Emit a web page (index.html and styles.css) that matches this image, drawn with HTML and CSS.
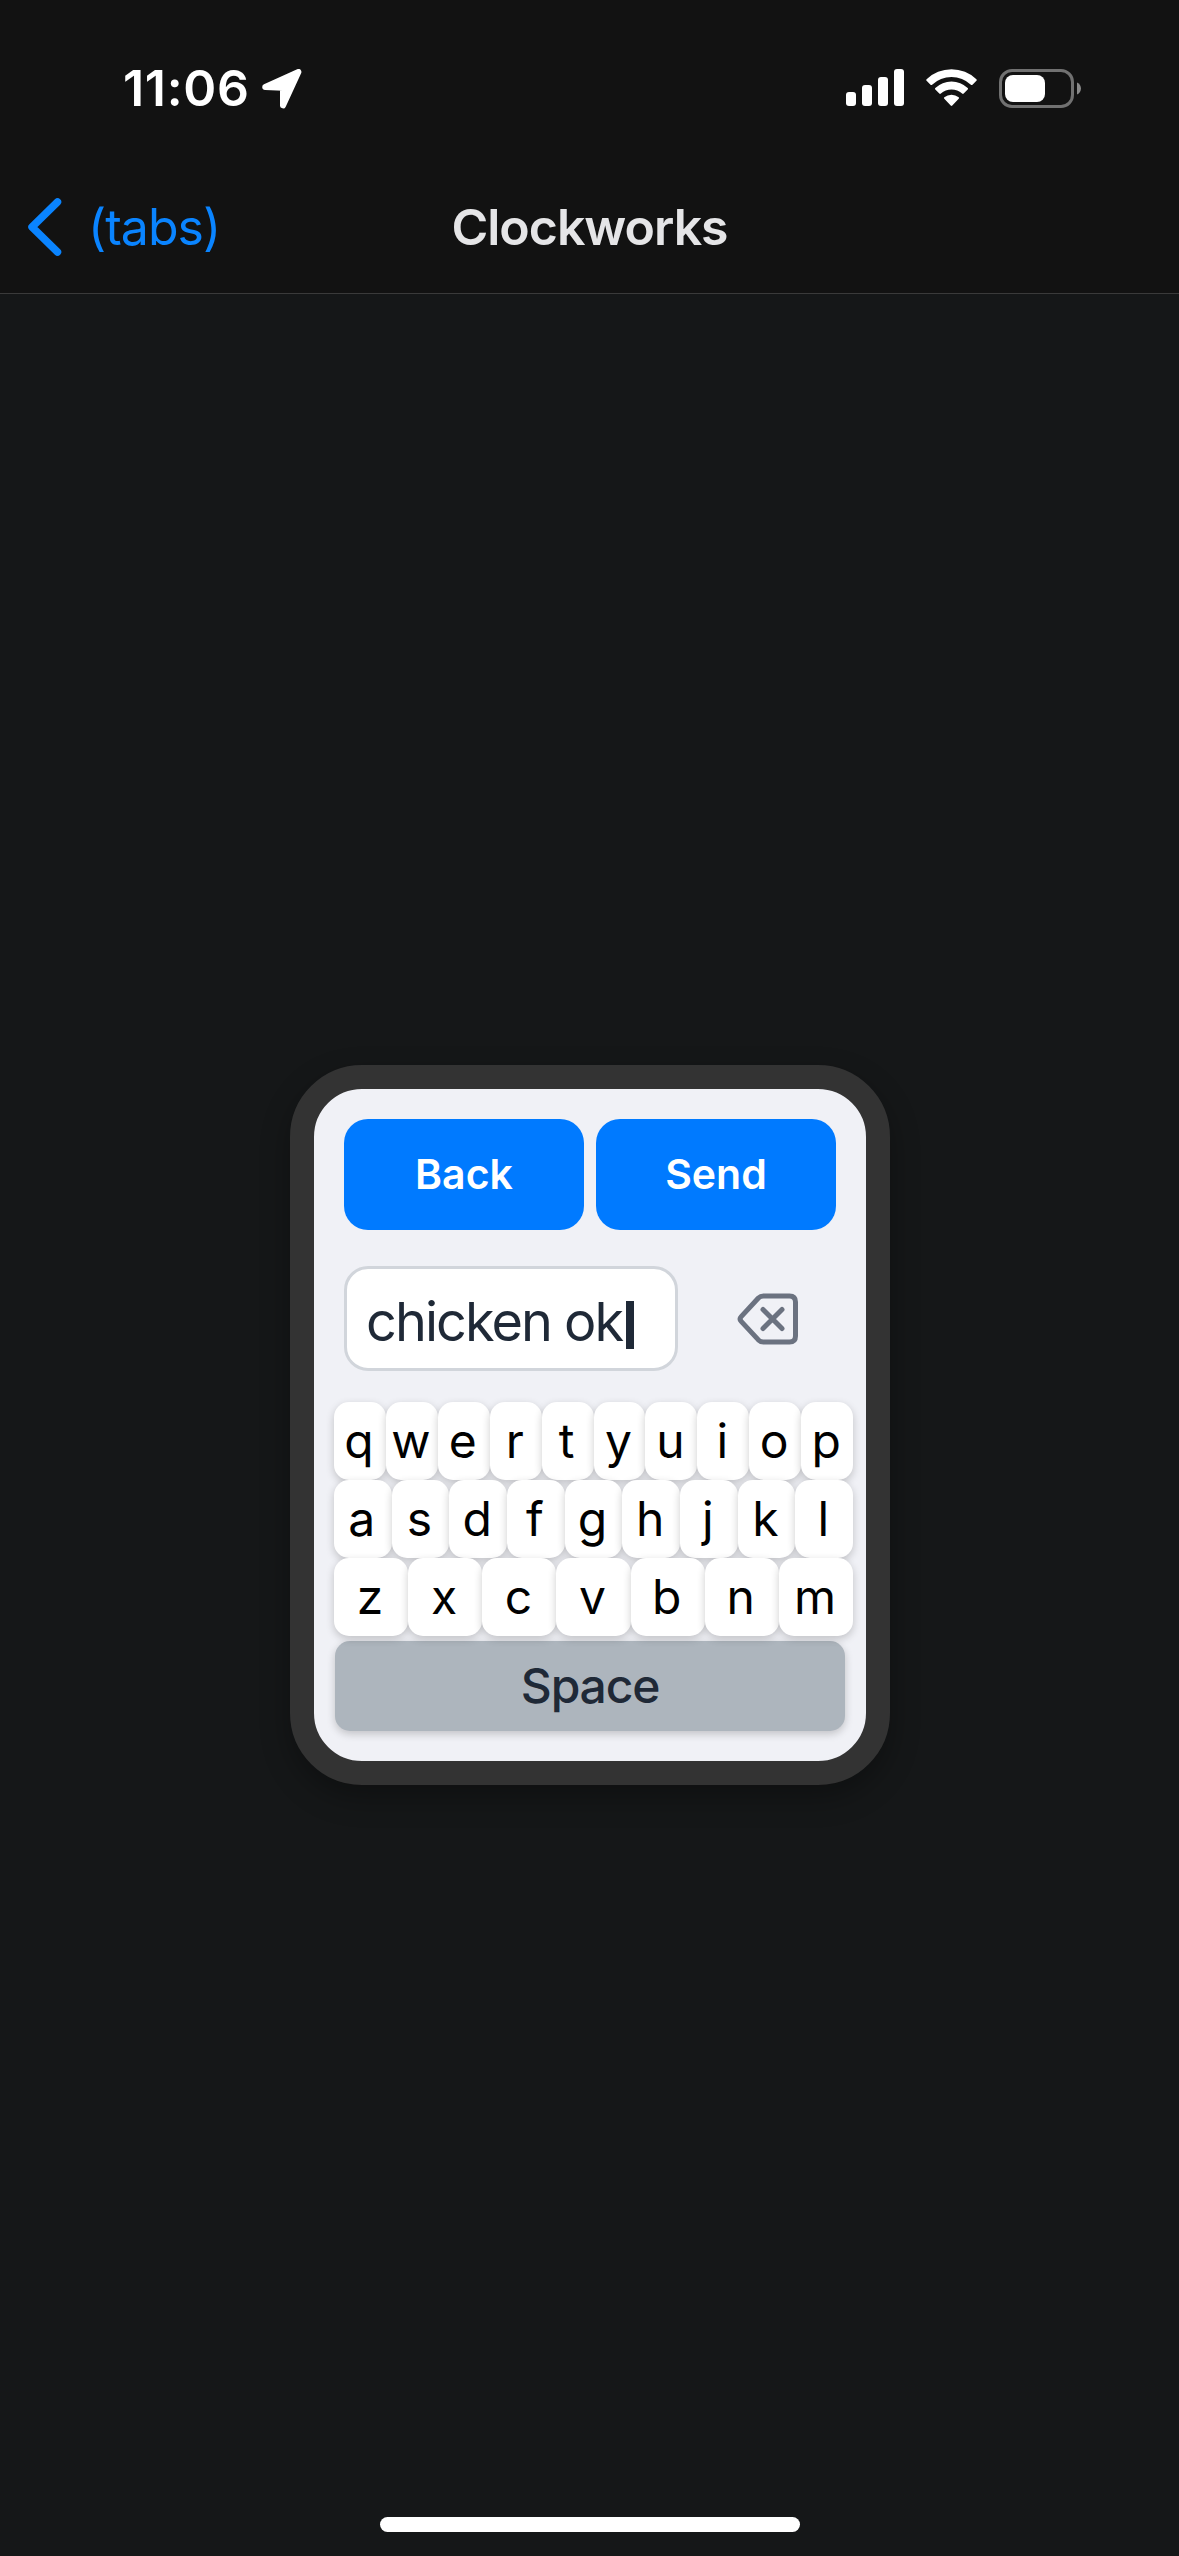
FILE: index.html
```html
<!DOCTYPE html>
<html lang="en">
<head>
<meta charset="utf-8">
<title>Clockworks</title>
<link rel="stylesheet" href="styles.css">
</head>
<body>
<div class="screen">
  <header class="header">
    <div class="status">
      <div class="status-left">
        <span class="time">11:06</span>
        <svg class="location" width="40" height="40" viewBox="0 0 40 40"><path d="M3.200 18 36.400 3 21 36.400V18.700Z" fill="#fff" stroke="#fff" stroke-width="6" stroke-linejoin="round"/></svg>
      </div>
      <div class="status-right">
        <svg width="58" height="37" viewBox="0 0 58 37" fill="#fff"><rect x="0" y="23" width="10" height="14" rx="3"/><rect x="16" y="16" width="10" height="21" rx="3"/><rect x="32" y="8" width="10" height="29" rx="3"/><rect x="48" y="0" width="10" height="37" rx="3"/></svg>
        <svg class="wifi" width="51" height="38" viewBox="0 0 51 38" fill="#fff"><path d="M.6 10.2a36 36 0 0 1 49.8 0q.8.8 0 1.6l-3.900 3.900q-.8.8-1.600 0a28.500 28.500 0 0 0-38.800 0q-.8.8-1.600 0L.6 11.800q-.8-.8 0-1.600Z"/><path d="M9.300 19a23.500 23.500 0 0 1 32.400 0q.8.8 0 1.600l-4 4q-.7.7-1.600 0a15.500 15.500 0 0 0-21.200 0q-.9.7-1.600 0l-4-4q-.8-.8 0-1.600Z"/><path d="M18.300 28.200a11.500 11.500 0 0 1 14.400 0q.8.8 0 1.600l-6.400 6.700q-.8.8-1.600 0l-6.400-6.700q-.8-.8 0-1.600Z"/></svg>
        <svg width="82" height="39" viewBox="0 0 82 39"><rect x="1.500" y="1.500" width="72" height="36" rx="11.500" fill="none" stroke="#717171" stroke-width="3"/><rect x="6" y="6" width="40" height="27" rx="8" fill="#fff"/><path d="M78 13.500c5.300 2.400 5.300 9.600 0 12Z" fill="#8a8a8a"/></svg>
      </div>
    </div>
    <nav class="nav">
      <a class="nav-back">
        <svg width="34" height="58" viewBox="0 0 34 58"><path d="M29.500 4 4 29 29.500 54" fill="none" stroke="#0a84ff" stroke-width="7.500" stroke-linecap="round" stroke-linejoin="round"/></svg>
        <span class="nav-label">(tabs)</span>
      </a>
      <h1 class="nav-title">Clockworks</h1>
    </nav>
  </header>
  <main class="content">
    <section class="watch">
      <div class="actions">
        <button class="action">Back</button>
        <button class="action">Send</button>
      </div>
      <div class="entry">
        <div class="field"><span class="typed">chicken ok</span><span class="caret"></span></div>
        <button class="erase" aria-label="Delete"><svg width="62" height="52" viewBox="0 0 62 52" fill="none" stroke="#6b7280" stroke-width="5" stroke-linecap="round" stroke-linejoin="round"><path d="M26.500 2.900H52.500Q58.500 2.900 58.500 8.900V43Q58.500 49 52.500 49H26.500Q23.500 49 21.400 46.900L4.200 28.400Q2 26 4.200 23.600L21.400 5Q23.500 2.900 26.500 2.900ZM26 16.500 45 35.500M45 16.500 26 35.500"/></svg></button>
      </div>
      <div class="keyboard">
        <div class="row"><span class="key">q</span><span class="key">w</span><span class="key">e</span><span class="key">r</span><span class="key">t</span><span class="key">y</span><span class="key">u</span><span class="key">i</span><span class="key">o</span><span class="key">p</span></div>
        <div class="row"><span class="key">a</span><span class="key">s</span><span class="key">d</span><span class="key">f</span><span class="key">g</span><span class="key">h</span><span class="key">j</span><span class="key">k</span><span class="key">l</span></div>
        <div class="row"><span class="key">z</span><span class="key">x</span><span class="key">c</span><span class="key">v</span><span class="key">b</span><span class="key">n</span><span class="key">m</span></div>
      </div>
      <button class="space">Space</button>
    </section>
  </main>
  <footer class="home"><div class="home-bar"></div></footer>
</div>
</body>
</html>
```
FILE: styles.css
```css
* { box-sizing: border-box; }
body { margin: 0; background: #151718; font-family: Inter, "Liberation Sans", sans-serif; }
svg { display: block; flex: none; }
button { border: 0; padding: 0; font-family: inherit; }
.screen { width: 1179px; height: 2556px; display: flex; flex-direction: column; overflow: hidden; }
.header { height: 294px; flex: none; background: #121212; border-bottom: 1px solid #3a3a3a; }
.status { height: 161px; padding: 69px 98px 0 123px; display: flex; justify-content: space-between; color: #fff; }
.status-left { display: flex; }
.time { width: 139px; font-size: 50px; font-weight: 600; line-height: 38px; letter-spacing: 0.7px; }
.status-right { display: flex; align-items: flex-start; gap: 22px; }
.nav { height: 132px; display: grid; grid-template-columns: 1fr auto 1fr; align-items: center; }
.nav-back { display: flex; align-items: center; gap: 26px; padding-left: 28px; color: #0a84ff; }
.nav-label { font-size: 50px; line-height: 60px; letter-spacing: -1px; }
.nav-title { margin: 0; font-size: 50px; font-weight: 600; line-height: 60px; letter-spacing: -1px; color: #e5e5e7; }
.content { flex: 1; padding-top: 771px; }
.watch { width: 600px; height: 720px; margin-left: 290px; border: 24px solid #333; border-radius: 72px; background: #f0f1f6; box-shadow: 0 12px 30px rgba(0, 0, 0, 0.3); padding: 30px 0 0 20px; }
.actions { display: flex; gap: 12px; padding-left: 10px; }
.action { width: 240px; height: 111px; padding-bottom: 2px; border-radius: 24px; background: #007aff; color: #fff; font-size: 41px; font-weight: 600; }
.entry { display: flex; align-items: center; padding: 36px 0 0 10px; }
.field { width: 334px; height: 105px; border: 3px solid #d1d5db; border-radius: 24px; background: #fff; display: flex; align-items: center; padding: 6px 0 0 19px; }
.typed { font-size: 54px; color: #1f2937; white-space: nowrap; letter-spacing: -1.95px; }
.caret { width: 8px; height: 48px; margin: 6px 0 0 4px; background: #1f2937; }
.erase { margin-left: 59px; background: none; }
.keyboard { width: 519px; padding-top: 31px; }
.row { display: flex; height: 78px; }
.key { flex: 1; height: 78px; padding-right: 2px; border-radius: 15px; background: #fff; box-shadow: 0 3px 9px rgba(0, 0, 0, 0.2); font-size: 48px; line-height: 78px; text-align: center; color: #000; }
.space { display: block; width: 510px; height: 90px; margin: 5px 0 0 1px; padding-bottom: 2px; border-radius: 15px; background: #adb5bd; box-shadow: 0 3px 9px rgba(0, 0, 0, 0.2); font-size: 48px; font-weight: 500; letter-spacing: -1.2px; color: #1f2937; }
.home { height: 39px; flex: none; display: flex; justify-content: center; }
.home-bar { width: 420px; height: 15px; border-radius: 8px; background: #fff; }
```
